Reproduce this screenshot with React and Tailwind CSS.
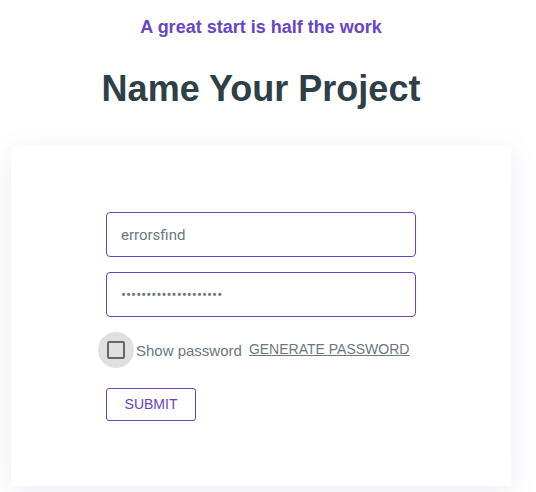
import React from "react";

export default function App() {
  return (
    <div className="min-h-screen bg-white font-['Liberation_Sans',Arial,sans-serif]">
      <div className="w-[500px] ml-[11px] pt-[13px]">
        {/* Heading */}
        <p className="text-center text-[18px] leading-[28px] font-bold text-[#6844c8]">
          A great start is half the work
        </p>
        <h1 className="mt-[28px] text-center text-[36px] leading-[40px] font-bold text-[#2e3f48]">
          Name Your Project
        </h1>

        {/* Card */}
        <div className="mt-[37px] bg-white rounded-[3px] shadow-[0_6px_28px_rgba(110,115,170,0.13)] pt-[66px] pb-[65px]">
          <form className="w-[310px] mx-auto flex flex-col">
            <input
              type="text"
              readOnly
              value="errorsfind"
              className="h-[45px] w-full rounded-[4px] border border-[#6844c8] px-[14px] text-[15px] text-[#6b7780] font-['Roboto',sans-serif] outline-none"
            />
            <input
              type="password"
              readOnly
              value="aaaaaaaaaaaaaaaaaaaa"
              className="mt-[15px] h-[45px] w-full rounded-[4px] border border-[#6844c8] px-[14px] text-[15px] text-[#6b7780] font-['Roboto',sans-serif] outline-none"
            />

            {/* Show password row */}
            <div className="mt-[15px] flex items-center h-[36px]">
              <label className="flex items-center -ml-2">
                <span className="flex items-center justify-center w-[36px] h-[36px] rounded-full bg-[#e0e0e0]">
                  <span className="w-[18px] h-[18px] rounded-[2px] border-2 border-[#666666]" />
                </span>
                <span className="ml-[2px] text-[15px] text-[#6b7780] leading-none pt-[1px]">
                  Show password
                </span>
              </label>
              <a href="#" className="ml-[7px] text-[14px] text-[#6b7780] underline uppercase leading-none -mt-[2px]">
                Generate password
              </a>
            </div>

            <div className="mt-[20px]">
              <button
                type="button"
                className="h-[33px] w-[90px] rounded-[3px] border border-[#6844c8] text-[14px] text-[#6844c8] bg-white"
              >
                SUBMIT
              </button>
            </div>
          </form>
        </div>
      </div>
    </div>
  );
}
